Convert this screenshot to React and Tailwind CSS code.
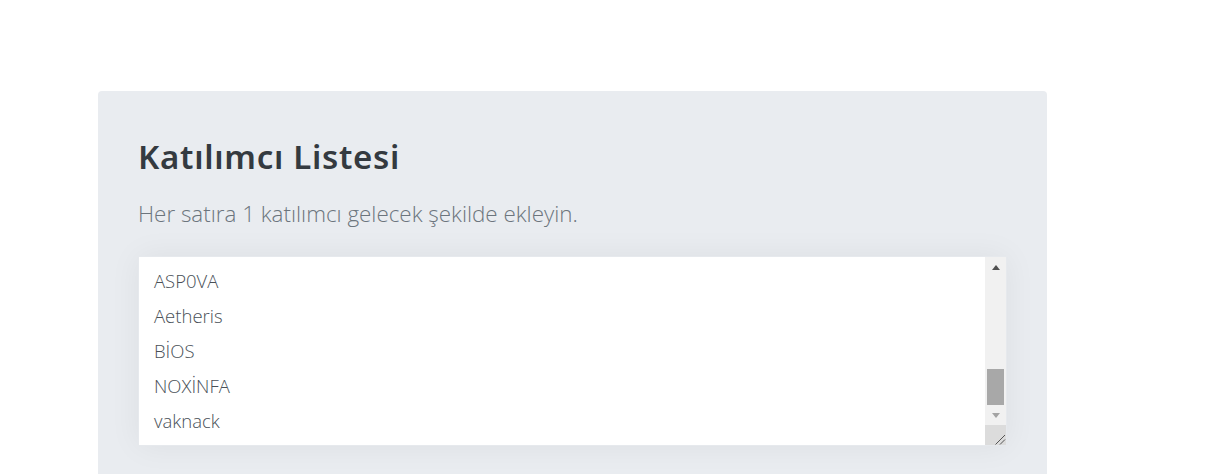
import { useEffect, useRef } from 'react';

const katilimcilar = [
  'Ahmet', 'Mehmet', 'Zeynep', 'Elif', 'Can', 'Deniz', 'Ece', 'Burak', 'Selin', 'Mert',
  'Kaan', 'Ayşe', 'Emre', 'Derya', 'Kaan',
  'ASP0VA', 'Aetheris', 'BİOS', 'NOXİNFA', 'vaknack',
];

function KaydirmaCubugu() {
  // the browser hides native scrollbars, so this one is drawn over the textarea
  return (
    <div className="pointer-events-none absolute top-px right-px bottom-px flex w-[21px] flex-col bg-[#f1f1f1]">
      <div className="flex h-[20px] items-center justify-center">
        <div className="h-0 w-0 border-x-[4.5px] border-b-[5px] border-x-transparent border-b-[#505050]" />
      </div>
      <div className="flex flex-1 flex-col justify-end">
        <div className="ml-[2px] h-[36px] w-[17px] bg-[#a8a8a8]" />
      </div>
      <div className="flex h-[20px] items-center justify-center">
        <div className="h-0 w-0 border-x-[4.5px] border-t-[5px] border-x-transparent border-t-[#a3a3a3]" />
      </div>
      <div className="h-[20px] bg-[#dcdcdc]">
        <svg width="21" height="20" viewBox="0 0 21 20" fill="none" stroke="#555" strokeWidth="1">
          <path d="M10.5 19.5 20 10" />
          <path d="M15 19.5 20 14.5" />
        </svg>
      </div>
    </div>
  );
}

export default function App() {
  const alanRef = useRef(null);

  useEffect(() => {
    if (alanRef.current) alanRef.current.scrollTop = alanRef.current.scrollHeight;
  }, []);

  return (
    <main className="min-h-screen w-full bg-white pt-[91px] pl-[98px]">
      <section className="w-[949px] rounded bg-[#e9ecf0] px-10 pt-[47px] pb-10">
        <h1 className="text-[33px] leading-[38px] font-semibold text-[#343a40] tracking-[0.7px] font-['Noto_Sans',sans-serif]">
          Katılımcı Listesi
        </h1>
        <p className="mt-[23px] text-[22.4px] leading-[30px] font-light text-[#6c757d] font-['Open_Sans',sans-serif]">
          Her satıra 1 katılımcı gelecek şekilde ekleyin.
        </p>
        <div className="relative mt-[27px] h-[190px] w-[869px] shadow-[0_0_30px_rgba(0,0,0,0.06)]">
          <textarea
            ref={alanRef}
            defaultValue={katilimcilar.join('\n')}
            className="block h-full w-full resize-none border border-[#e6e9ed] bg-white pt-[8px] pr-[30px] pb-[7px] pl-[15px] text-[18.5px] leading-[35px] font-light text-[#495057] outline-none font-['Open_Sans',sans-serif]"
          />
          <KaydirmaCubugu />
        </div>
      </section>
    </main>
  );
}
